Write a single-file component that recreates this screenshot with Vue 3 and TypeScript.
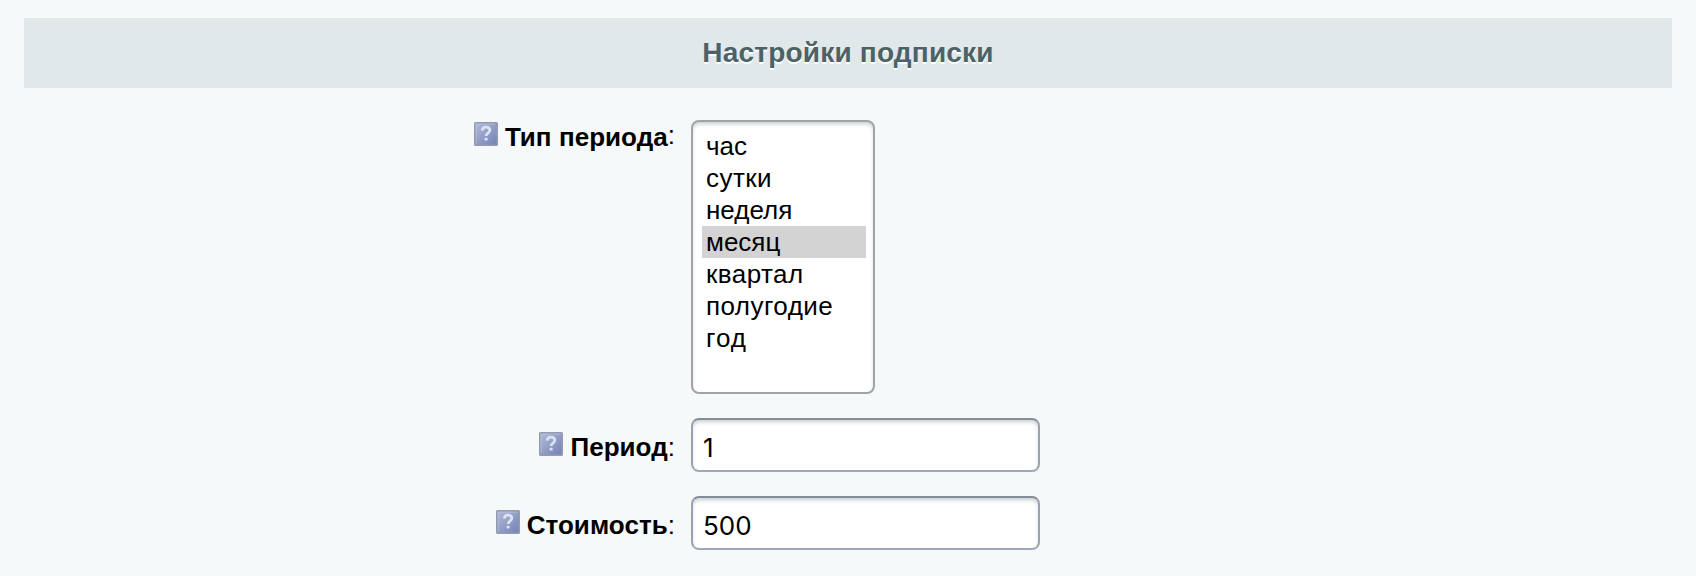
<script setup lang="ts">
import { ref } from 'vue'

interface Field {
  name: string
  label: string
  value: string
}

const periodTypes: string[] = ['час', 'сутки', 'неделя', 'месяц', 'квартал', 'полугодие', 'год']
const periodType = ref('месяц')

const fields = ref<Field[]>([
  { name: 'period', label: 'Период', value: '1' },
  { name: 'price', label: 'Стоимость', value: '500' },
])
</script>

<template>
  <svg class="defs" width="0" height="0" aria-hidden="true">
    <defs>
      <linearGradient id="help-fill" x1="0" y1="0" x2="1" y2="1">
        <stop offset="0" stop-color="#b3bdd9" />
        <stop offset="1" stop-color="#7280b4" />
      </linearGradient>
      <symbol id="help" viewBox="0 0 24 24">
        <rect x="0.75" y="0.75" width="22.5" height="22.5" rx="0.8" fill="url(#help-fill)" stroke="#939caf" stroke-width="1.5" />
        <path d="M2.2 21.5V2.2H21.5" fill="none" stroke="#c3cbe0" stroke-width="1" opacity="0.5" />
        <path d="M8.3 8.6C8.4 6.3 9.7 5.1 12 5.1c2.3 0 3.8 1.2 3.8 3.1 0 2.8-3.7 2.9-3.7 5.7" fill="none" stroke="#dce2f3" stroke-width="2.8" />
        <rect x="10.6" y="15.7" width="3" height="2.8" rx="0.7" fill="#dce2f3" />
      </symbol>
    </defs>
  </svg>
  <form class="page" @submit.prevent>
    <h2 class="heading">Настройки подписки</h2>
    <div class="row">
      <div class="label label-type">
        <svg class="help"><use href="#help" /></svg><b>Тип периода</b><span class="colon">:</span>
      </div>
      <ul class="list" role="listbox">
        <li
          v-for="item in periodTypes"
          :key="item"
          role="option"
          :aria-selected="item === periodType"
          :class="{ selected: item === periodType }"
          @click="periodType = item"
        >{{ item }}</li>
      </ul>
    </div>
    <div v-for="field in fields" :key="field.name" class="row">
      <label class="label" :for="field.name">
        <svg class="help"><use href="#help" /></svg><b>{{ field.label }}</b>:
      </label>
      <input :id="field.name" v-model="field.value" class="input" type="text" />
    </div>
  </form>
</template>

<style>
body {
  background: #f5f9fa;
}
</style>

<style scoped>
.defs {
  position: absolute;
}
.page {
  box-sizing: border-box;
  height: 576px;
  padding: 18px 24px 0;
  overflow: hidden;
  font: 26px/32px "Liberation Sans", Arial, sans-serif;
  color: #000;
}
.heading {
  height: 70px;
  margin: 0 0 32px;
  background: #e0e8e9;
  color: #4b6267;
  font-size: 28px;
  line-height: 69px;
  letter-spacing: 0.2px;
  text-align: center;
  text-shadow: 0 2px 0 #fff;
}
.row {
  display: flex;
  align-items: flex-start;
  margin-bottom: 24px;
}
.label {
  width: 651px;
  padding-top: 13px;
  margin-right: 16px;
  text-align: right;
  white-space: nowrap;
}
.label b {
  letter-spacing: 0.05px;
}
.label-type {
  padding-top: 1px;
}
.colon {
  vertical-align: 2px;
  line-height: 1;
}
.help {
  display: inline-block;
  width: 24px;
  height: 24px;
  margin-right: 7px;
  vertical-align: baseline;
}
.list,
.input {
  box-sizing: border-box;
  border: 2px solid #a0a4a4;
  border-radius: 8px;
  background: #fff;
  box-shadow: inset 0 3px 4px -1px #c9cdd0;
}
.list {
  width: 184px;
  height: 274px;
  margin: 0;
  padding: 8px 7px 0 9px;
  list-style: none;
}
.list li {
  height: 32px;
  padding-left: 4px;
}
.list li:nth-child(2),
.list li:nth-child(n + 5) {
  letter-spacing: 0.45px;
}
.list li:last-child {
  letter-spacing: 1px;
}
.list .selected {
  background: #d3d3d3;
}
.input {
  width: 349px;
  height: 54px;
  padding: 4px 10px 0;
  border-color: #868e9c #9aa1b1 #a0a7b7;
  outline: none;
  color: #000;
  font: 26px/32px Inter, "Liberation Sans", sans-serif;
}
</style>
